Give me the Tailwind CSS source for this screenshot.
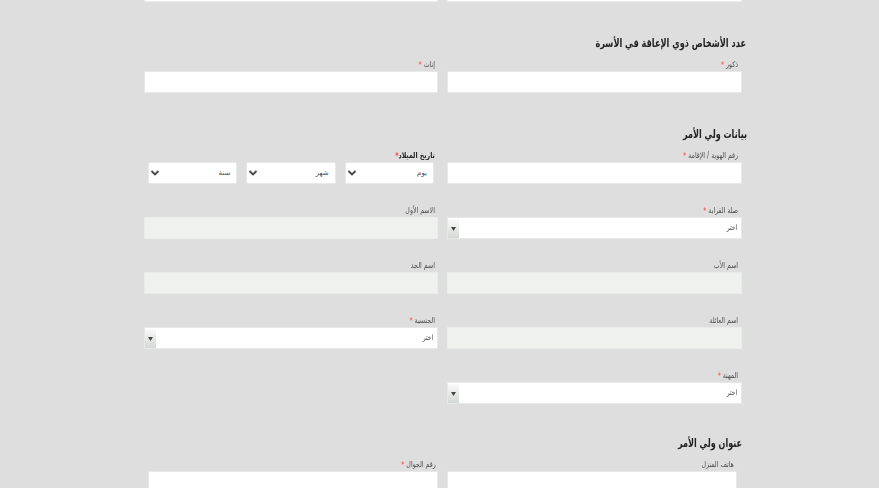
<!DOCTYPE html>
<html lang="ar" dir="rtl">
<head>
<meta charset="utf-8">
<script src="https://cdn.jsdelivr.net/npm/@tailwindcss/browser@4"></script>
</head>
<body class="m-0 h-[488px] overflow-hidden bg-[#dedede] font-['DejaVu_Sans',sans-serif] text-[#4a4a4a]">
<main class="mt-[-21px] mr-[137px] grid w-[598px] grid-cols-[295px_294px] gap-x-[9px] gap-y-[19px] blur-[0.35px]">
  <input class="h-[23px] w-full border border-[#ececec] bg-white" aria-label="a">
  <input class="h-[23px] w-full border border-[#ececec] bg-white" aria-label="b">

  <h2 class="col-span-2 mt-[12px] mr-[-4px] mb-[-15px] h-[20px] origin-right scale-x-[.71] text-[11.500px] leading-[20px] font-bold text-[#222]">عدد الأشخاص ذوي الإعاقة في الأسرة</h2>

  <div><label class="block h-[14px] origin-right scale-x-[.78] pr-[5px] text-[8px] leading-[16px]">ذكور <span class="relative top-[1px] text-[#f44]">*</span></label><input class="block h-[22px] w-full border border-[#e8e8e8] bg-white"></div>
  <div><label class="block h-[14px] origin-right scale-x-[.78] pr-[4px] text-[8px] leading-[16px]">إناث <span class="relative top-[1px] text-[#f44]">*</span></label><input class="block h-[22px] w-full border border-[#e8e8e8] bg-white"></div>

  <h2 class="col-span-2 mt-[12px] mr-[-5px] mb-[-15px] h-[20px] origin-right scale-x-[.7] text-[11.500px] leading-[20px] font-bold text-[#222]">بيانات ولي الأمر</h2>

  <div><label class="block h-[14px] origin-right scale-x-[.78] pr-[5px] text-[8px] leading-[16px]">رقم الهوية / الإقامة <span class="relative top-[1px] text-[#f44]">*</span></label><input class="block h-[22px] w-full border border-[#e8e8e8] bg-white"></div>
  <div>
    <label class="block h-[14px] origin-right scale-x-[.78] pr-[4px] text-[8px] leading-[16px] font-bold text-[#222]">تاريخ الميلاد<span class="relative top-[1px] text-[#f44]">*</span></label>
    <div class="flex gap-[9px] px-[4px]">
      <div class="flex h-[22px] flex-1 items-center justify-between rounded-[2px] border border-[#e8e8e8] bg-white pr-[6px] pl-[1px] text-[7px]"><span>يوم</span><svg class="h-[8px] w-[10px] text-[#444]" viewBox="0 0 10 8" fill="none" stroke="currentColor" stroke-width="1.8"><path d="M1.5 2l3.5 3.5L8.500 2"/></svg></div>
      <div class="flex h-[22px] flex-1 items-center justify-between rounded-[2px] border border-[#e8e8e8] bg-white pr-[6px] pl-[1px] text-[7px]"><span>شهر</span><svg class="h-[8px] w-[10px] text-[#444]" viewBox="0 0 10 8" fill="none" stroke="currentColor" stroke-width="1.8"><path d="M1.5 2l3.5 3.5L8.500 2"/></svg></div>
      <div class="flex h-[22px] flex-1 items-center justify-between rounded-[2px] border border-[#e8e8e8] bg-white pr-[6px] pl-[1px] text-[7px]"><span>سنة</span><svg class="h-[8px] w-[10px] text-[#444]" viewBox="0 0 10 8" fill="none" stroke="currentColor" stroke-width="1.8"><path d="M1.5 2l3.5 3.5L8.500 2"/></svg></div>
    </div>
  </div>

  <div><label class="block h-[14px] origin-right scale-x-[.78] pr-[5px] text-[8px] leading-[16px]">صلة القرابة <span class="relative top-[1px] text-[#f44]">*</span></label><div class="flex h-[22px] items-start justify-between border border-[#e8e8e8] bg-white pt-[4px] pr-[4px] text-[7.500px] leading-[12px]"><span class="origin-right scale-x-[.8]">اختر</span><span class="mt-[-3px] flex h-[19px] w-[11px] items-center justify-center bg-gradient-to-b from-[#fafafa] to-[#d4d8d4]"><svg class="h-[4px] w-[5px]" viewBox="0 0 5 4" fill="#444"><path d="M0 0h5L2.500 4z"/></svg></span></div></div>
  <div><label class="block h-[14px] origin-right scale-x-[.78] pr-[4px] text-[8px] leading-[16px]">الاسم الأول</label><input disabled class="block h-[22px] w-full border border-[#e9ecea] bg-[#eef1ee]"></div>

  <div><label class="block h-[14px] origin-right scale-x-[.78] pr-[5px] text-[8px] leading-[16px]">اسم الأب</label><input disabled class="block h-[22px] w-full border border-[#e9ecea] bg-[#eef1ee]"></div>
  <div><label class="block h-[14px] origin-right scale-x-[.78] pr-[4px] text-[8px] leading-[16px]">اسم الجد</label><input disabled class="block h-[22px] w-full border border-[#e9ecea] bg-[#eef1ee]"></div>

  <div><label class="block h-[14px] origin-right scale-x-[.78] pr-[5px] text-[8px] leading-[16px]">اسم العائلة</label><input disabled class="block h-[22px] w-full border border-[#e9ecea] bg-[#eef1ee]"></div>
  <div><label class="block h-[14px] origin-right scale-x-[.78] pr-[4px] text-[8px] leading-[16px]">الجنسية <span class="relative top-[1px] text-[#f44]">*</span></label><div class="flex h-[22px] items-start justify-between border border-[#e8e8e8] bg-white pt-[4px] pr-[4px] text-[7.500px] leading-[12px]"><span class="origin-right scale-x-[.8]">اختر</span><span class="mt-[-3px] flex h-[19px] w-[11px] items-center justify-center bg-gradient-to-b from-[#fafafa] to-[#d4d8d4]"><svg class="h-[4px] w-[5px]" viewBox="0 0 5 4" fill="#444"><path d="M0 0h5L2.500 4z"/></svg></span></div></div>

  <div><label class="block h-[14px] origin-right scale-x-[.78] pr-[5px] text-[8px] leading-[16px]">المهنة <span class="relative top-[1px] text-[#f44]">*</span></label><div class="flex h-[22px] items-start justify-between border border-[#e8e8e8] bg-white pt-[4px] pr-[4px] text-[7.500px] leading-[12px]"><span class="origin-right scale-x-[.8]">اختر</span><span class="mt-[-3px] flex h-[19px] w-[11px] items-center justify-center bg-gradient-to-b from-[#fafafa] to-[#d4d8d4]"><svg class="h-[4px] w-[5px]" viewBox="0 0 5 4" fill="#444"><path d="M0 0h5L2.500 4z"/></svg></span></div></div>
  <div></div>

  <h2 class="col-span-2 mt-[10px] mb-[-15px] h-[20px] origin-right scale-x-[.7] text-[11.500px] leading-[20px] font-bold text-[#222]">عنوان ولي الأمر</h2>

  <div class="pr-[5px]"><label class="block h-[14px] origin-right scale-x-[.78] pr-[4px] text-[8px] leading-[16px]">هاتف المنزل</label><input class="block h-[22px] w-full border border-[#e8e8e8] bg-white"></div>
  <div class="pl-[4px]"><label class="block h-[14px] origin-right scale-x-[.78] pr-[3px] text-[8px] leading-[16px]">رقم الجوال <span class="relative top-[1px] text-[#f44]">*</span></label><input class="block h-[22px] w-full border border-[#e8e8e8] bg-white"></div>
</main>
</body>
</html>
